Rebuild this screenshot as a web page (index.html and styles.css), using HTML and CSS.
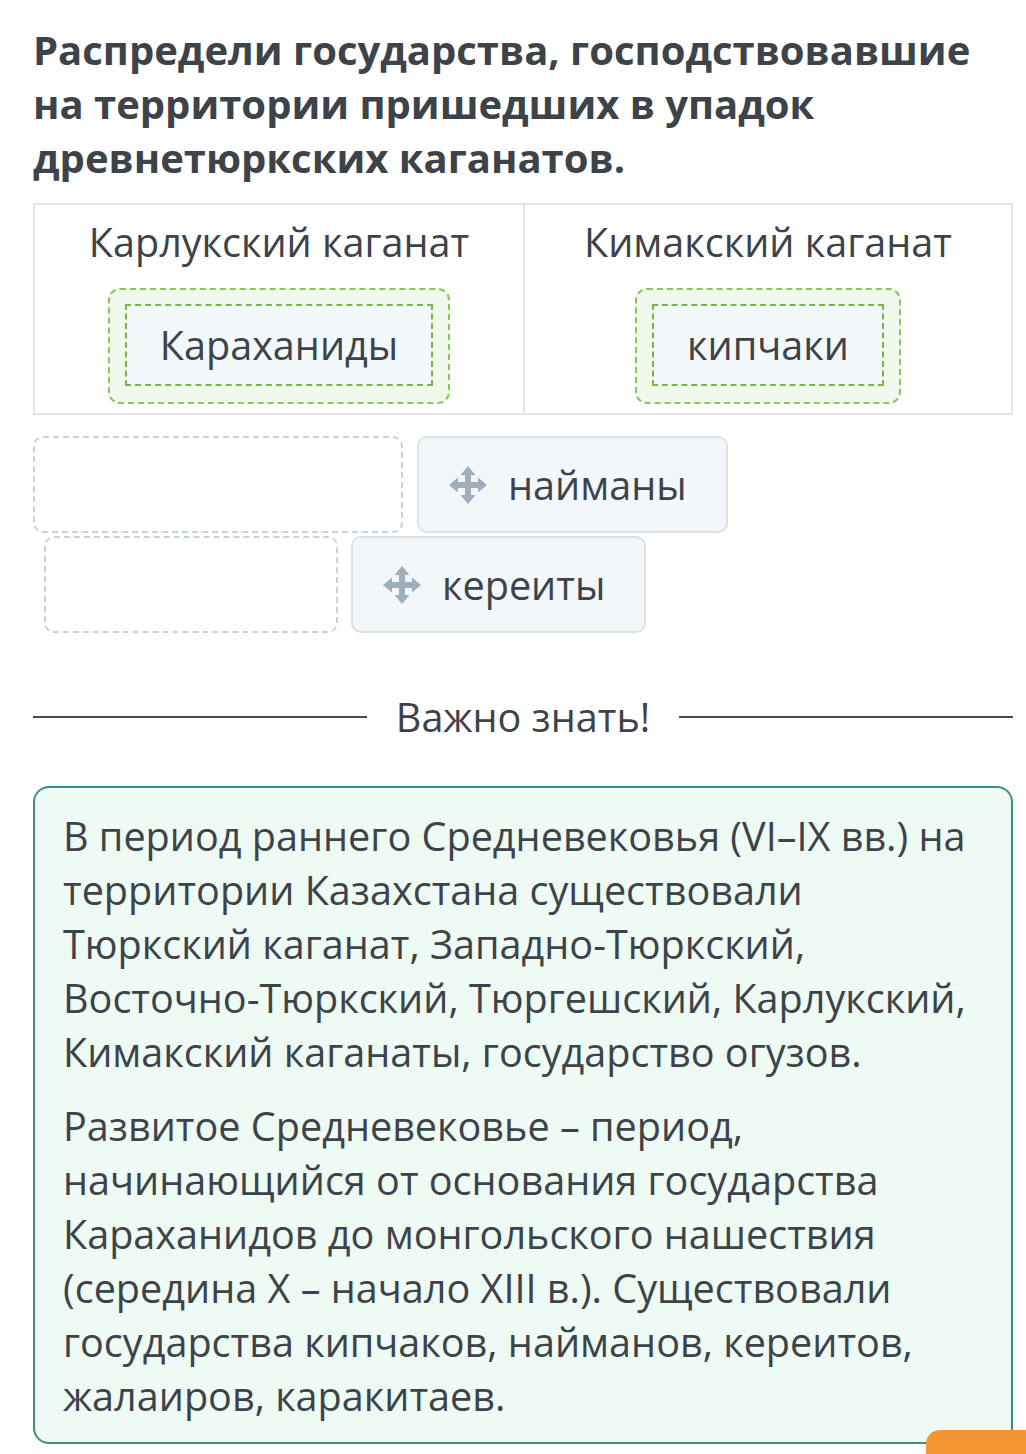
FILE: index.html
```html
<!DOCTYPE html>
<html>
<head>
  <meta charset="UTF-8" />
  <title>Распредели государства</title>
  <link rel="stylesheet" href="styles.css">
</head>
<body>
  <div class="page">
    <h1 class="task">Распредели государства, господствовавшие на территории пришедших в упадок древнетюркских каганатов.</h1>

    <div class="board">
      <div class="column">
        <div class="column-title">Карлукский каганат</div>
        <div class="drop-zone filled">
          <div class="placed">Караханиды</div>
        </div>
      </div>
      <div class="column">
        <div class="column-title">Кимакский каганат</div>
        <div class="drop-zone filled">
          <div class="placed">кипчаки</div>
        </div>
      </div>
    </div>

    <div class="pool">
      <div class="pool-row">
        <div class="slot wide"></div>
        <div class="chip">
          <svg class="move-icon" viewBox="0 0 40 40"><path d="M20 1 L27.5 10 L23 10 L23 17 L30 17 L30 12.5 L39 20 L30 27.5 L30 23 L23 23 L23 30 L27.5 30 L20 39 L12.5 30 L17 30 L17 23 L10 23 L10 27.5 L1 20 L10 12.5 L10 17 L17 17 L17 10 L12.5 10 Z"/></svg>
          <span>найманы</span>
        </div>
      </div>
      <div class="pool-row shifted">
        <div class="slot narrow"></div>
        <div class="chip">
          <svg class="move-icon" viewBox="0 0 40 40"><path d="M20 1 L27.5 10 L23 10 L23 17 L30 17 L30 12.5 L39 20 L30 27.5 L30 23 L23 23 L23 30 L27.5 30 L20 39 L12.5 30 L17 30 L17 23 L10 23 L10 27.5 L1 20 L10 12.5 L10 17 L17 17 L17 10 L12.5 10 Z"/></svg>
          <span>кереиты</span>
        </div>
      </div>
    </div>

    <div class="divider">
      <span class="divider-line"></span>
      <span class="divider-text">Важно знать!</span>
      <span class="divider-line"></span>
    </div>

    <div class="note">
      <p>В период раннего Средневековья (VI–IX вв.) на территории Казахстана существовали Тюркский каганат, Западно-Тюркский, Восточно-Тюркский, Тюргешский, Карлукский, Кимакский каганаты, государство огузов.</p>
      <p>Развитое Средневековье – период, начинающийся от основания государства Караханидов до монгольского нашествия (середина X – начало XIII в.). Существовали государства кипчаков, найманов, кереитов, жалаиров, каракитаев.</p>
    </div>
  </div>

  <div class="next-button"></div>
</body>
</html>
```

FILE: styles.css
```css
* {
  box-sizing: border-box;
}
body {
  margin: 0;
  font-family: "Open Sans", "Noto Sans", sans-serif;
  font-size: 39.6px;
  color: #3d4349;
  background: #fff;
}
.page {
  padding: 23px 13px 0 33px;
}
.task {
  margin: 0 0 18px;
  font-size: 40px;
  line-height: 54px;
  font-weight: 700;
}
.board {
  display: grid;
  grid-template-columns: 1fr 1fr;
  border: 2px solid #e1e4e7;
}
.column {
  display: flex;
  flex-direction: column;
  align-items: center;
  padding: 13px 0 9px;
}
.column + .column {
  border-left: 2px solid #e1e4e7;
}
.column-title {
  line-height: 48px;
  margin-bottom: 22px;
}
.drop-zone {
  border: 2px dashed #8cc45e;
  border-radius: 12px;
  background: #f1f9ec;
  padding: 14px 15px 16px;
}
.placed {
  height: 82px;
  display: flex;
  align-items: center;
  padding: 0 33px;
  border: 2px dashed #78b545;
  background: #f3f8fb;
}
.pool {
  margin-top: 21px;
}
.pool-row {
  display: flex;
  gap: 14px;
}
.pool-row.shifted {
  margin-top: 3px;
  margin-left: 11px;
  gap: 13px;
}
.slot {
  height: 97px;
  border: 2px dashed #c9d2d9;
  border-radius: 10px;
}
.slot.wide {
  width: 370px;
}
.slot.narrow {
  width: 294px;
}
.chip {
  height: 97px;
  display: flex;
  align-items: center;
  gap: 20px;
  padding: 0 39px 0 29px;
  border: 2px solid #dbe2e7;
  border-radius: 10px;
  background: #f3f7fa;
}
.move-icon {
  width: 40px;
  height: 40px;
  fill: #9eaebb;
}
.divider {
  display: flex;
  align-items: center;
  gap: 29px;
  margin-top: 60px;
}
.divider-line {
  flex: 1;
  height: 2px;
  background: #464b51;
}
.divider-text {
  line-height: 48px;
}
.note {
  margin-top: 45px;
  border: 2px solid #3f8e85;
  border-radius: 16px;
  background: #eefaf4;
  padding: 21px 38px 19px 28px;
}
.note p {
  margin: 0;
  line-height: 54px;
}
.note p + p {
  margin-top: 20px;
}
.next-button {
  position: absolute;
  right: 0;
  top: 1430px;
  width: 100px;
  height: 40px;
  background: #f39633;
  border-top-left-radius: 14px;
}
```
